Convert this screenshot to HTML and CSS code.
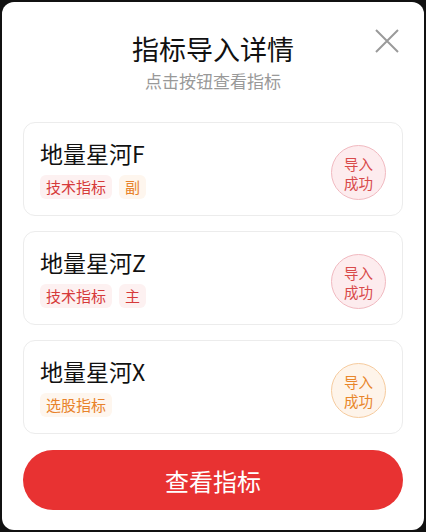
FILE: index.html
```html
<!DOCTYPE html>
<html lang="zh-CN">
<head>
    <meta charset="UTF-8">
    <meta name="viewport" content="width=device-width, initial-scale=1.0">
    <title>指标导入详情</title>
    <link rel="stylesheet" href="styles.css">
</head>
<body>

    <div class="dialog">
        <button class="close" aria-label="关闭">
            <svg width="24" height="24" viewBox="0 0 24 24">
                <path d="M1 1 L23 23 M23 1 L1 23" stroke="#9a9a9a" stroke-width="2" fill="none"/>
            </svg>
        </button>

        <h1 class="title">指标导入详情</h1>
        <p class="subtitle">点击按钮查看指标</p>

        <div class="list">
            <div class="item">
                <div class="info">
                    <div class="name">地量星河F</div>
                    <div class="tags">
                        <span class="tag red">技术指标</span>
                        <span class="tag orange">副</span>
                    </div>
                </div>
                <div class="badge red">导入<br>成功</div>
            </div>

            <div class="item">
                <div class="info">
                    <div class="name">地量星河Z</div>
                    <div class="tags">
                        <span class="tag red">技术指标</span>
                        <span class="tag red">主</span>
                    </div>
                </div>
                <div class="badge red">导入<br>成功</div>
            </div>

            <div class="item">
                <div class="info">
                    <div class="name">地量星河X</div>
                    <div class="tags">
                        <span class="tag orange">选股指标</span>
                    </div>
                </div>
                <div class="badge orange">导入<br>成功</div>
            </div>
        </div>

        <button class="view-btn">查看指标</button>
    </div>

</body>
</html>
```

FILE: styles.css
```css
body {
    margin: 0;
    padding: 2px 2px 0;
    background-color: #111;
    font-family: "Noto Sans CJK SC", "Noto Sans", sans-serif;
    height: 532px;
    box-sizing: border-box;
    overflow: hidden;
}
.dialog {
    position: relative;
    background-color: #fff;
    border-radius: 12px;
    height: 528px;
    padding: 29px 21px 0;
    box-sizing: border-box;
    text-align: center;
}
.close {
    position: absolute;
    top: 27px;
    right: 25px;
    padding: 0;
    border: none;
    background: none;
    cursor: pointer;
}
.close svg {
    display: block;
}
.title {
    margin: 0;
    font-size: 27px;
    line-height: 36px;
    font-weight: 400;
    color: #111;
}
.subtitle {
    margin: 2px 0 0;
    font-size: 17px;
    line-height: 24px;
    color: #999;
}
.list {
    display: flex;
    flex-direction: column;
    gap: 15px;
    margin-top: 29px;
}
.item {
    display: flex;
    justify-content: space-between;
    border: 1px solid #ececec;
    border-radius: 12px;
    padding: 15px 16px;
    text-align: left;
}
.name {
    font-size: 23px;
    line-height: 30px;
    color: #111;
}
.tags {
    display: flex;
    gap: 7px;
    margin-top: 7px;
}
.tag {
    font-size: 15px;
    line-height: 24px;
    padding: 0 6px;
    border-radius: 6px;
}
.tag.red {
    color: #d63a3a;
    background-color: #fdf1f1;
}
.tag.orange {
    color: #e8822a;
    background-color: #fef6ee;
}
.badge {
    width: 53px;
    height: 53px;
    margin-top: 7px;
    border-radius: 50%;
    display: flex;
    align-items: center;
    justify-content: center;
    font-size: 14.5px;
    line-height: 19px;
    text-align: center;
}
.badge.red {
    color: #d84a4a;
    background-color: #fdecee;
    border: 1px solid #f1b9c0;
}
.badge.orange {
    color: #e8862a;
    background-color: #fef4ea;
    border: 1px solid #f6cb9e;
}
.view-btn {
    display: block;
    width: 100%;
    height: 60px;
    margin-top: 16px;
    border: none;
    border-radius: 30px;
    background-color: #e83232;
    color: #fff;
    font-family: inherit;
    font-size: 24px;
    cursor: pointer;
}
```
